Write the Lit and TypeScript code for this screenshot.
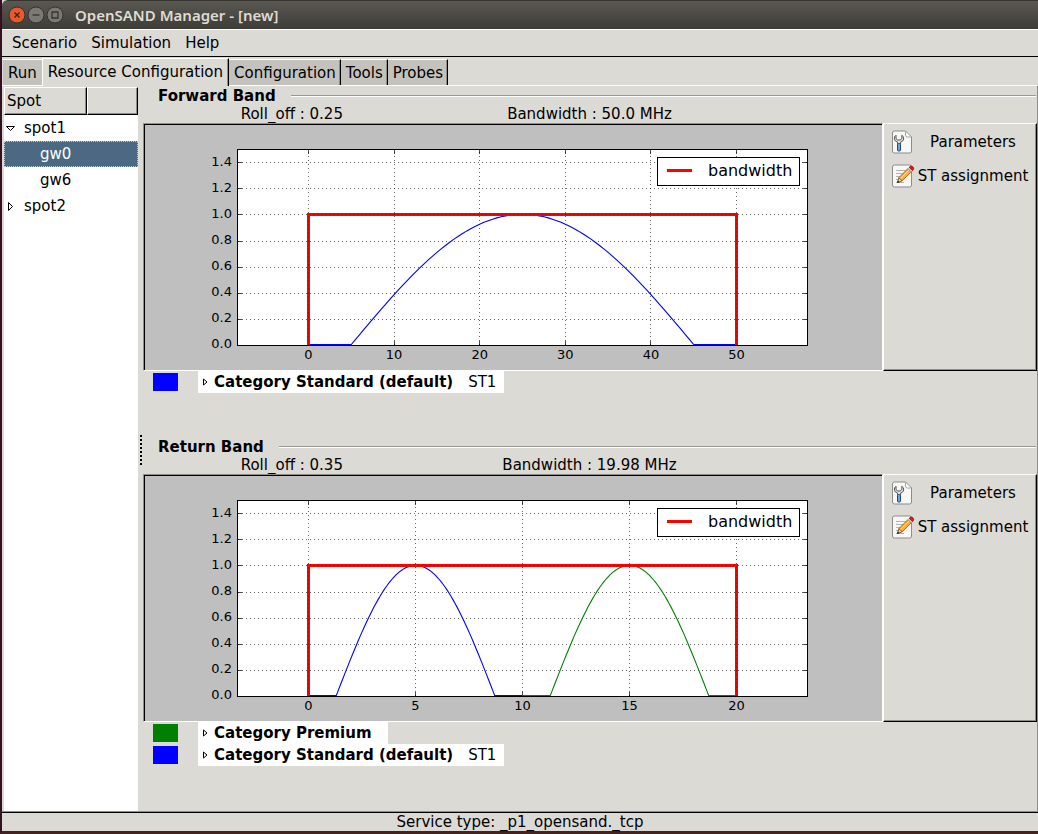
import { LitElement, html, svg, css } from "lit";
import { customElement, property, state } from "lit/decorators.js";

interface Curve { color: string; from: number; to: number; start: number; end: number; }
interface Category { name: string; color: string; terminals: string; }
interface Band {
  title: string; rollOff: string; bandwidth: string; max: number; width: number; step: number;
  curves: Curve[]; categories: Category[];
}

const BANDS: Band[] = [
  {
    title: "Forward Band", rollOff: "0.25", bandwidth: "50.0 MHz", max: 50, width: 50, step: 10,
    curves: [{ color: "#0000ff", from: 5, to: 45, start: 0, end: 50 }],
    categories: [{ name: "Category Standard (default)", color: "#0000ff", terminals: "ST1" }],
  },
  {
    title: "Return Band", rollOff: "0.35", bandwidth: "19.98 MHz", max: 20, width: 19.98, step: 5,
    curves: [
      { color: "#0000ff", from: 1.3, to: 8.7, start: 0, end: 10 },
      { color: "#008000", from: 11.3, to: 18.7, start: 10, end: 20 },
    ],
    categories: [
      { name: "Category Premium", color: "#008000", terminals: "" },
      { name: "Category Standard (default)", color: "#0000ff", terminals: "ST1" },
    ],
  },
];

@customElement("spectrum-chart")
export class SpectrumChart extends LitElement {
  @property({ attribute: false }) band!: Band;

  static styles = css`
    :host { display: block; min-width: 0; background: #bfbfbf; border: 1px solid #8f8d85; border-right-color: #fff; border-bottom-color: #fff; }
    .frame { border-top: 1px solid #000; border-left: 1px solid #000; }
    .plot { display: block; width: 100%; height: 245px; font-family: "DejaVu Sans", sans-serif; }
    .tick { font-size: 13px; }
    .legend { font-size: 16px; }
    .grid { stroke: #000; stroke-width: 1; stroke-dasharray: 1 3; opacity: 0.6; }
    .mark { stroke: #000; stroke-width: 1; opacity: 0.7; }
    .axes { fill: none; stroke: #000; }
    .paper { fill: #fff; }
    .limit { fill: none; stroke: #f00; stroke-width: 3; }
    .dots { fill: none; stroke: #900; stroke-width: 1; stroke-dasharray: 1 3; }
    .curve { fill: none; stroke-width: 1.1; }
    .box { fill: #fff; stroke: #000; }
  `;

  render() {
    const { max, width, step, curves, title } = this.band;
    const x = (v: number) => 163.5 + (v / max) * 428;
    const y = (v: number) => 220.5 - v * 130.6;
    const snap = (v: number) => Math.floor(v) + 0.5;
    const xs: number[] = [];
    for (let v = 0; v <= max; v += step) xs.push(v);
    const ys = [0, 2, 4, 6, 8, 10, 12, 14].map((n) => n / 10);
    const base = y(0) - 1;
    const path = (c: Curve) => {
      let d = `M${x(c.start)} ${base}L${x(c.from)} ${base}`;
      for (let i = 1; i <= 80; i++) {
        const v = c.from + ((c.to - c.from) * i) / 80;
        d += `L${x(v).toFixed(2)} ${(base - Math.sin((Math.PI * i) / 80) * 130.2).toFixed(2)}`;
      }
      return d + `L${x(c.end)} ${base}`;
    };
    const outline = `M${x(0)} ${y(0)}V${snap(y(1))}H${snap(x(width))}V${y(0)}`;
    return html`<div class="frame"><svg class="plot" viewBox="0 0 737 245" role="img" aria-label="${title} spectrum">
      <rect class="paper" x="92.5" y="24.5" width="570" height="196"></rect>
      ${xs.map((v) => svg`
        <path class="grid" d="M${snap(x(v))} 220V25"></path>
        <path class="mark" d="M${snap(x(v))} 220v-4M${snap(x(v))} 25v4"></path>
        <text class="tick" text-anchor="middle" x=${x(v)} y="234">${v}</text>`)}
      ${ys.map((v) => svg`
        <path class="grid" d="M93 ${snap(y(v))}H662"></path>
        <path class="mark" d="M93 ${snap(y(v))}h4M662 ${snap(y(v))}h-4"></path>
        <text class="tick" text-anchor="end" x="87" y=${Math.round(y(v) + 2.9)}>${v.toFixed(1)}</text>`)}
      ${curves.map((c) => svg`<path class="curve" stroke=${c.color} d=${path(c)}></path>`)}
      <path class="limit" d=${outline}></path>
      <path class="dots" d=${outline}></path>
      <rect class="axes" x="92.5" y="24.5" width="570" height="196"></rect>
      <rect class="box" x="512.5" y="32.5" width="142" height="28"></rect>
      <path class="limit" d="M522 45.5h25"></path>
      <text class="legend" x="563" y="51">bandwidth</text>
    </svg></div>`;
  }
}

@customElement("band-panel")
export class BandPanel extends LitElement {
  @property({ attribute: false }) band!: Band;

  static styles = css`
    :host { display: block; height: 351px; }
    .head { display: flex; align-items: center; margin: 0 1px 0 15px; gap: 15px; height: 20px; }
    .title { margin: 0; font-size: 15px; line-height: 20px; font-weight: bold; }
    .rule { flex: 1; height: 1px; background: #999892; border-bottom: 1px solid #fff; }
    .facts { display: grid; grid-template-columns: 1fr 1fr 1fr; height: 17px; line-height: 17px; text-align: center; margin-right: 1px; }
    .body { display: grid; grid-template-columns: minmax(0, 1fr) 154px; }
    .actions { border: 1px solid #fff; border-right-color: #000; border-bottom-color: #000; box-shadow: inset -1px -1px #8f8d85; padding-top: 1px; }
    .action { display: grid; grid-template-columns: 24px 1fr; align-items: center; width: 100%; height: 34px; padding: 0 5px 0 7px; border: 0; background: none; font: inherit; color: inherit; text-align: center; white-space: nowrap; }
    .icon { display: block; width: 24px; height: 24px; }
    .category { display: flex; height: 22px; align-items: center; padding-left: 10px; gap: 20px; }
    .swatch { width: 25px; height: 18px; }
    .entry { display: flex; align-items: center; height: 22px; background: #fff; padding: 0 8px 0 4px; border: 0; font: inherit; color: inherit; white-space: nowrap; }
    .bare { padding-right: 1px; }
    .name { font-weight: bold; margin: 0 15px 0 6px; }
    .tri { width: 6px; height: 8px; display: block; fill: none; stroke: #000; }
  `;

  render() {
    const b = this.band;
    return html`
      <div class="head"><h2 class="title">${b.title}</h2><div class="rule"></div></div>
      <div class="facts"><span>Roll_off : ${b.rollOff}</span><span>Bandwidth : ${b.bandwidth}</span></div>
      <div class="body">
        <spectrum-chart .band=${b}></spectrum-chart>
        <div class="actions">
          <button class="action" type="button">
            <svg class="icon" viewBox="0 0 24 24" aria-hidden="true">
              <path d="M1.500 3q0-2 2-2h11l6 6v14q0 2-2 2h-15q-2 0-2-2z" fill="#f7f7f5" stroke="#8b8d88"></path>
              <path d="M14.500 1v4q0 2 2 2h4z" fill="#fff" stroke="#a5a6a1"></path>
              <path d="M5 5.300q-2.200 1.200-1.600 3.900 .6 2.300 3.200 2.900v2.400h3v-2.400q2.700-.7 3.100-3.100 .3-2.600-1.900-3.700v3.400l-1.700 1.300h-2.300l-1.800-1.300z" fill="#e3e4e1" stroke="#555753" stroke-linejoin="round"></path>
              <rect x="6.500" y="13.500" width="3" height="7.500" rx="1" fill="#729fcf" stroke="#204a87"></rect>
            </svg>
            <span>Parameters</span>
          </button>
          <button class="action" type="button">
            <svg class="icon" viewBox="0 0 24 24" aria-hidden="true">
              <path d="M1.500 3q0-2 2-2h15q2 0 2 2v18q0 2-2 2h-15q-2 0-2-2z" fill="#f7f7f5" stroke="#8b8d88"></path>
              <path d="M5 6.500h11M5 9.500h9M5 12.500h7M5 15.500h4M5 18.500h8" stroke="#b4b5b0"></path>
              <path d="M6.500 18.500l1.500-5 3.300 3.300z" fill="#f3d9a8" stroke="#5c3a0c" stroke-width="0.800"></path>
              <path d="M6 19l.8-2.500 1.700 1.700z" fill="#222"></path>
              <path d="M8 13.500l9-9 3.300 3.300-9 9z" fill="#fcaf3e" stroke="#a85f08" stroke-width="0.900"></path>
              <path d="M9.500 14.500l8.500-8.500" stroke="#fddb9b"></path>
              <path d="M17 4.500l1.200-1.200 3.300 3.300-1.200 1.200z" fill="#ddd" stroke="#888" stroke-width="0.600"></path>
              <path d="M18.200 3.300l.8-.8q1.500-1 2.900.3 1.400 1.500.4 3l-.8.8z" fill="#e01b24" stroke="#a40000" stroke-width="0.800"></path>
            </svg>
            <span>ST assignment</span>
          </button>
        </div>
      </div>
      ${b.categories.map((c) => html`
        <div class="category">
          <span class="swatch" style="background:${c.color}"></span>
          <button class="entry ${c.terminals ? "" : "bare"}" type="button">
            <svg class="tri" viewBox="0 0 6 8" aria-hidden="true"><path d="M1.500 1v6l3.500-3z"></path></svg>
            <span class="name">${c.name}</span>
            ${c.terminals ? html`<span>${c.terminals}</span>` : ""}
          </button>
        </div>`)}
    `;
  }
}

@customElement("app-root")
export class AppRoot extends LitElement {
  @state() private selected = "gw0";

  static styles = css`
    :host { display: block; font-family: "DejaVu Sans", sans-serif; font-size: 15px; line-height: 20px; color: #000; }
    .window { box-sizing: border-box; min-height: 100vh; display: flex; flex-direction: column; background: #dcdad5; border-left: 2px solid #351020; border-bottom: 3px solid #46211f; }
    .titlebar { display: flex; align-items: center; height: 29px; padding-left: 6px; background: linear-gradient(#5a5851, #3d3c37); border-top: 1px solid #35342f; box-sizing: border-box; border-radius: 6px 0 0 0; gap: 1px; }
    .control { width: 18px; height: 18px; padding: 0; border: 0; background: none; }
    .glyph { display: block; width: 18px; height: 18px; }
    .caption { margin: 0 0 0 10px; font: 600 15px/20px "Noto Sans", "Open Sans", sans-serif; color: #dfdbd2; }
    .menubar { display: flex; gap: 14px; height: 26px; padding-left: 10px; border-top: 1px solid #fff; border-bottom: 1px solid #000; align-items: center; }
    .menu { border: 0; background: none; padding: 0; font: inherit; color: inherit; }
    .tabs { display: flex; align-items: flex-end; height: 28px; border-bottom: 1px solid #fff; padding-left: 1px; }
    .tab { box-sizing: border-box; height: 26px; border: 0; border-top: 1px solid #fff; border-right: 1px solid #000; background: #c4c2bd; box-shadow: inset -1px 0 #8f8d85; font: inherit; color: inherit; padding: 0 4px 0 5px; white-space: nowrap; }
    .first { border-right: 0; box-shadow: none; padding: 0 5px; }
    .active { height: 28px; margin-bottom: -1px; background: #dcdad5; border-left: 1px solid #fff; padding: 0 5px 2px; }
    .main { flex: 1; display: grid; grid-template-columns: 134px 5px minmax(0, 1fr); padding-left: 2px; }
    .side { background: #fff; margin-top: 1px; }
    .columns { display: grid; grid-template-columns: 83px 51px; height: 28px; }
    .column { box-sizing: border-box; padding: 3px 2px; background: #dcdad5; border: 1px solid #fff; border-right-color: #000; border-bottom-color: #000; box-shadow: inset -1px -1px #8f8d85; }
    .tree { list-style: none; margin: 0; padding: 0; }
    .node { display: flex; align-items: center; box-sizing: border-box; width: 100%; height: 26px; border: 1px dotted transparent; padding: 0; background: none; font: inherit; color: inherit; text-align: left; }
    .leaf { padding-left: 35px; }
    .selected { background: #4b6983; color: #fff; border-color: #c0cbd5; }
    .arrow { width: 9px; height: 9px; margin: 0 9px 0 1px; fill: none; stroke: #000; }
    .handle { align-self: center; height: 32px; width: 2px; margin: 5px 0 0 2px; background: repeating-linear-gradient(#000 0 2px, #dcdad5 2px 4px); }
    .bands { border-right: 1px solid #8f8d85; }
    .status { height: 18px; line-height: 18px; text-align: center; margin-top: 1px; border-top: 1px solid #000; box-shadow: 0 -1px #8f8d85; }
  `;

  private node(name: string, leaf: boolean, open = false) {
    return html`<li><button type="button" class="node ${leaf ? "leaf" : ""} ${this.selected === name ? "selected" : ""}"
      @click=${() => { this.selected = name; }}>
      ${leaf ? "" : html`<svg class="arrow" viewBox="0 0 9 9" aria-hidden="true"><path d=${open ? "M0.500 2.500h8l-4 4z" : "M2.500 0.500v8l4-4z"}></path></svg>`}${name}</button></li>`;
  }

  render() {
    return html`<div class="window">
      <header class="titlebar">
        <button class="control" type="button" aria-label="Close"><svg class="glyph" viewBox="0 0 18 18"><circle cx="9" cy="9" r="8" fill="#e9592e" stroke="#34332e"></circle><path d="M6.500 6.500l5 5m0-5l-5 5" stroke="#4a1c0c" stroke-width="1.300"></path></svg></button>
        <button class="control" type="button" aria-label="Minimize"><svg class="glyph" viewBox="0 0 18 18"><circle cx="9" cy="9" r="8" fill="#7b7972" stroke="#34332e"></circle><path d="M5.500 9h7" stroke="#34332e" stroke-width="1.300"></path></svg></button>
        <button class="control" type="button" aria-label="Maximize"><svg class="glyph" viewBox="0 0 18 18"><circle cx="9" cy="9" r="8" fill="#7b7972" stroke="#34332e"></circle><path d="M6 6h6v6H6z" fill="none" stroke="#34332e" stroke-width="1.300"></path></svg></button>
        <h1 class="caption">OpenSAND Manager - [new]</h1>
      </header>
      <nav class="menubar">${["Scenario", "Simulation", "Help"].map((m) => html`<button class="menu" type="button">${m}</button>`)}</nav>
      <div class="tabs" role="tablist">
        ${["Run", "Resource Configuration", "Configuration", "Tools", "Probes"].map((t, i) => html`<button type="button" role="tab" aria-selected=${i === 1 ? "true" : "false"} class="tab ${i === 0 ? "first" : i === 1 ? "active" : ""}">${t}</button>`)}
      </div>
      <main class="main">
        <aside class="side">
          <div class="columns"><div class="column">Spot</div><div class="column"></div></div>
          <ul class="tree">${this.node("spot1", false, true)}${this.node("gw0", true)}${this.node("gw6", true)}${this.node("spot2", false)}</ul>
        </aside>
        <div class="handle"></div>
        <div class="bands">${BANDS.map((b) => html`<band-panel .band=${b}></band-panel>`)}</div>
      </main>
      <footer class="status">Service type: _p1_opensand._tcp</footer>
    </div>`;
  }
}
